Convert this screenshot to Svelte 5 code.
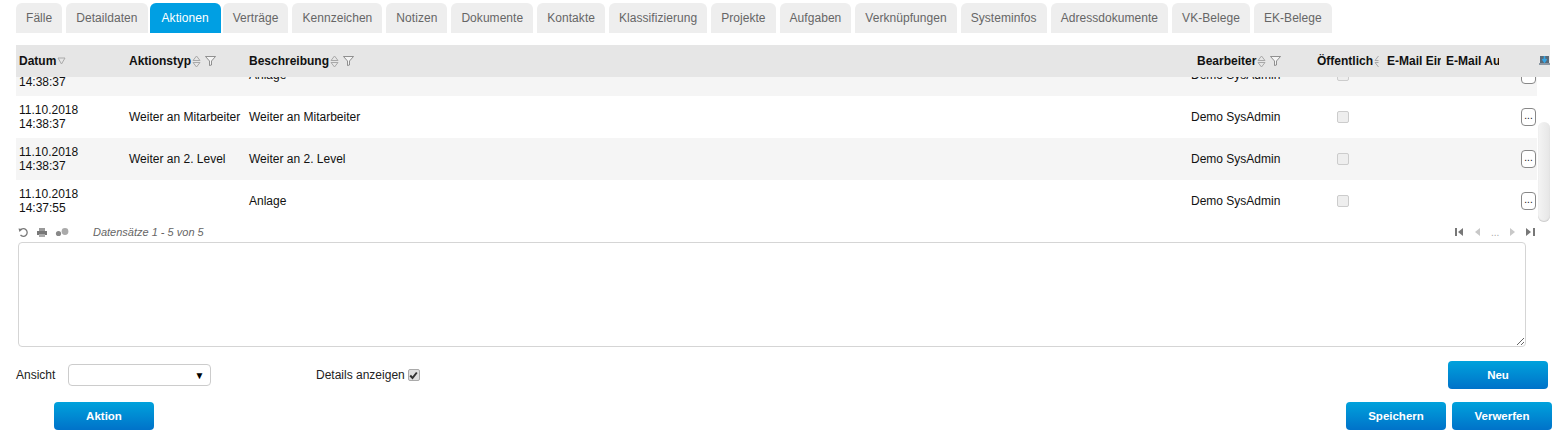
<script>
  const tabs = ['Fälle', 'Detaildaten', 'Aktionen', 'Verträge', 'Kennzeichen', 'Notizen', 'Dokumente', 'Kontakte', 'Klassifizierung', 'Projekte', 'Aufgaben', 'Verknüpfungen', 'Systeminfos', 'Adressdokumente', 'VK-Belege', 'EK-Belege'];

  const rows = [
    { date: '11.10.2018', time: '14:38:37', type: '', text: 'Anlage' },
    { date: '11.10.2018', time: '14:38:37', type: 'Weiter an Mitarbeiter', text: 'Weiter an Mitarbeiter' },
    { date: '11.10.2018', time: '14:38:37', type: 'Weiter an 2. Level', text: 'Weiter an 2. Level' },
    { date: '11.10.2018', time: '14:37:55', type: '', text: 'Anlage' }
  ];
</script>

{#snippet sortIcon()}
  <svg class="sort" width="9" height="13" viewBox="0 0 9 13">
    <path d="M4.5 1 L1 5.5 H8 Z M4.5 12 L1 7.5 H8 Z" fill="none" stroke="#a8a8a8" />
  </svg>
{/snippet}

{#snippet filterIcon()}
  <svg class="filter" width="11" height="10" viewBox="0 0 11 10">
    <path d="M0.5 0.5 H10.5 L6.5 5 V9 L4.5 9.5 V5 Z" fill="#f4f4f4" stroke="#777" stroke-width="0.8" />
  </svg>
{/snippet}

<div class="page">
  <nav class="tabs">
    {#each tabs as tab}
      <div class="tab" class:active={tab === 'Aktionen'}>{tab}</div>
    {/each}
  </nav>

  <div class="grid">
    <div class="head cols">
      <div class="h first">Datum
        <svg class="sort" width="9" height="8" viewBox="0 0 9 8"><path d="M1 1 H8 L4.5 7 Z" fill="none" stroke="#aaa" /></svg>
      </div>
      <div class="h">Aktionstyp {@render sortIcon()} {@render filterIcon()}</div>
      <div class="h">Beschreibung {@render sortIcon()} {@render filterIcon()}</div>
      <div class="h bearbeiter">Bearbeiter {@render sortIcon()} {@render filterIcon()}</div>
      <div class="h">Öffentlich <svg class="sort" width="5" height="13" viewBox="0 0 5 13"><path d="M4.5 1 L1 5.5 H4.5 M4.5 12 L1 7.5 H4.5" fill="none" stroke="#a8a8a8" /></svg></div>
      <div class="h clip">E-Mail Eingang</div>
      <div class="h">E-Mail Ausgang</div>
      <div class="h export">
        <svg width="11" height="10" viewBox="0 0 11 10">
          <rect x="1" y="0" width="9" height="7" fill="#5a6a78" />
          <path d="M5.5 0 V5 M3.5 3 L5.5 6 L7.5 3" fill="none" stroke="#35a5e5" stroke-width="1.6" />
          <rect x="0" y="7" width="11" height="2" fill="#8a97a3" />
        </svg>
      </div>
    </div>

    <div class="body">
      <div class="viewport">
        <div class="rows">
          {#each rows as row, i}
            <div class="row cols" class:alt={i % 2 === 0}>
              <div class="c date">{row.date}<br />{row.time}</div>
              <div class="c">{row.type}</div>
              <div class="c">{row.text}</div>
              <div class="c">Demo SysAdmin</div>
              <div class="c check"><span class="box"></span></div>
              <div class="c"></div>
              <div class="c"></div>
              <div class="c more"><button class="dots">...</button></div>
            </div>
          {/each}
        </div>
      </div>
      <div class="scroll"><div class="thumb"></div></div>
    </div>
  </div>

  <div class="pager">
    <div class="pager-left">
      <svg width="11" height="11" viewBox="0 0 11 11"><path d="M2.5 3 A3.8 3.8 0 1 1 2.5 8" fill="none" stroke="#777" stroke-width="1.3" /><path d="M0.5 1.5 L4.5 2 L1.5 5 Z" fill="#777" /></svg>
      <svg width="12" height="11" viewBox="0 0 12 11"><rect x="3" y="1" width="6" height="3" fill="#999" /><rect x="1" y="4" width="10" height="4" fill="#777" /><rect x="3" y="7" width="6" height="3" fill="#aaa" /></svg>
      <svg width="14" height="11" viewBox="0 0 14 11"><circle cx="3.5" cy="6.5" r="2.6" fill="#888" /><circle cx="10" cy="4.5" r="3.4" fill="#aaa" /></svg>
      <span class="count">Datensätze 1 - 5 von 5</span>
    </div>
    <div class="pager-right">
      <svg width="9" height="8" viewBox="0 0 9 8"><path d="M0 0 H2 V8 H0 Z M8 0 V8 L3 4 Z" fill="#777" /></svg>
      <svg width="5" height="8" viewBox="0 0 5 8"><path d="M5 0 V8 L0 4 Z" fill="#c8c8c8" /></svg>
      <span class="dots-text">...</span>
      <svg width="5" height="8" viewBox="0 0 5 8"><path d="M0 0 V8 L5 4 Z" fill="#c8c8c8" /></svg>
      <svg width="9" height="8" viewBox="0 0 9 8"><path d="M0 0 V8 L5 4 Z M7 0 H9 V8 H7 Z" fill="#777" /></svg>
    </div>
  </div>

  <textarea class="notes"></textarea>

  <div class="options">
    <div class="view">
      <span>Ansicht</span>
      <div class="select"><span class="arrow">▼</span></div>
    </div>
    <div class="details">
      <span>Details anzeigen</span>
      <span class="box on">
        <svg width="9" height="9" viewBox="0 0 9 9"><path d="M1.2 4.5 L3.5 7 L7.8 1.5" fill="none" stroke="#333" stroke-width="2" /></svg>
      </span>
    </div>
    <button class="btn neu">Neu</button>
  </div>

  <div class="actions">
    <button class="btn aktion">Aktion</button>
    <div class="save">
      <button class="btn">Speichern</button>
      <button class="btn">Verwerfen</button>
    </div>
  </div>
</div>

<style>
  :global(body) {
    margin: 0;
    background: #fff;
  }

  .page {
    width: 1556px;
    height: 437px;
    overflow: hidden;
    font-family: "Liberation Sans", Arial, sans-serif;
    font-size: 12px;
    color: #111;
    box-sizing: border-box;
    padding-top: 3px;
  }

  .tabs {
    display: flex;
    gap: 4px;
    padding-left: 16px;
    height: 30px;
  }

  .tab {
    background: #eee;
    color: #666;
    height: 30px;
    line-height: 30px;
    padding: 0 10px;
    border-radius: 6px 6px 0 0;
    white-space: nowrap;
    letter-spacing: 0.05px;
  }

  .tab.active {
    background: #009fe3;
    color: #fff;
    padding: 0 12px;
    margin: 0 -2px;
  }

  .grid {
    margin: 12px 0 0 16px;
    width: 1534px;
  }

  .cols {
    display: grid;
    grid-template-columns: 113px 120px 942px 126px 70px 59px 53px 1fr;
    align-items: center;
  }

  .head {
    background: #e6e6e6;
    height: 32px;
  }

  .h {
    font-weight: bold;
    white-space: nowrap;
    overflow: hidden;
    display: flex;
    align-items: center;
  }

  .h.first {
    padding-left: 3px;
  }

  .h.bearbeiter {
    padding-left: 6px;
  }

  .h.clip {
    width: 54px;
  }

  .sort {
    margin-left: 1px;
  }

  .filter {
    margin-left: 4px;
  }

  .export {
    justify-content: flex-end;
  }

  .body {
    display: flex;
    height: 145px;
  }

  .viewport {
    width: 1521px;
    overflow: hidden;
  }

  .rows {
    margin-top: -23px;
  }

  .row {
    height: 42px;
    background: #fff;
  }

  .row.alt {
    background: #f5f5f5;
  }

  .c {
    white-space: nowrap;
  }

  .date {
    padding-left: 3px;
    line-height: 14px;
  }

  .check {
    padding-left: 20px;
    display: flex;
  }

  .box {
    display: inline-block;
    box-sizing: border-box;
    width: 12px;
    height: 12px;
    border: 1px solid #ccc;
    border-radius: 2px;
    background: #eee;
  }

  .more {
    display: flex;
    justify-content: flex-end;
    padding-right: 1px;
  }

  .dots {
    width: 15px;
    height: 18px;
    padding: 0 0 3px;
    background: #fff;
    border: 1px solid #888;
    border-radius: 4px;
    font: 10px "Liberation Sans", Arial, sans-serif;
    color: #111;
  }

  .scroll {
    width: 12px;
    margin-left: 1px;
    padding-top: 45px;
    box-sizing: border-box;
  }

  .thumb {
    height: 100px;
    border-radius: 6px;
    background: linear-gradient(90deg, #f4f4f4, #e6e6e6);
    box-shadow: inset 0 -1px 1px #ccc;
  }

  .pager {
    display: flex;
    justify-content: space-between;
    align-items: center;
    height: 20px;
    padding: 0 21px 0 18px;
  }

  .pager-left,
  .pager-right {
    display: flex;
    align-items: center;
  }

  .pager-left {
    gap: 7px;
  }

  .pager-right {
    gap: 11px;
  }

  .count {
    margin-left: 17px;
    font-style: italic;
    font-size: 11px;
    color: #666;
  }

  .dots-text {
    color: #aaa;
    font-size: 10px;
    width: 8px;
  }

  .notes {
    display: block;
    box-sizing: border-box;
    width: 1508px;
    height: 105px;
    margin-left: 18px;
    border: 1px solid #d5d5d5;
    border-radius: 4px;
    background: #fff;
    padding: 0;
    outline: none;
  }

  .options {
    display: flex;
    align-items: center;
    height: 28px;
    margin-top: 14px;
    padding: 0 8px 0 16px;
  }

  .view {
    display: flex;
    align-items: center;
    gap: 13px;
    width: 300px;
    color: #222;
  }

  .select {
    box-sizing: border-box;
    width: 143px;
    height: 22px;
    border: 1px solid #ccc;
    border-radius: 4px;
    display: flex;
    align-items: center;
    justify-content: flex-end;
    padding-right: 6px;
    background: #fff;
  }

  .arrow {
    font-size: 10px;
    color: #000;
  }

  .details {
    display: flex;
    align-items: center;
    gap: 3px;
    color: #222;
  }

  .box.on {
    display: flex;
    align-items: center;
    justify-content: center;
    background: #e0e0e0;
    border-color: #aaa;
  }

  .btn {
    box-sizing: border-box;
    width: 100px;
    height: 28px;
    border: none;
    border-radius: 4px;
    background: linear-gradient(#00a2dc, #0072c9);
    color: #fff;
    font: bold 11.5px "Liberation Sans", Arial, sans-serif;
    padding: 0;
  }

  .neu {
    margin-left: auto;
  }

  .actions {
    display: flex;
    justify-content: space-between;
    align-items: center;
    margin-top: 13px;
    padding: 0 4px 0 54px;
  }

  .save {
    display: flex;
    gap: 6px;
  }
</style>
